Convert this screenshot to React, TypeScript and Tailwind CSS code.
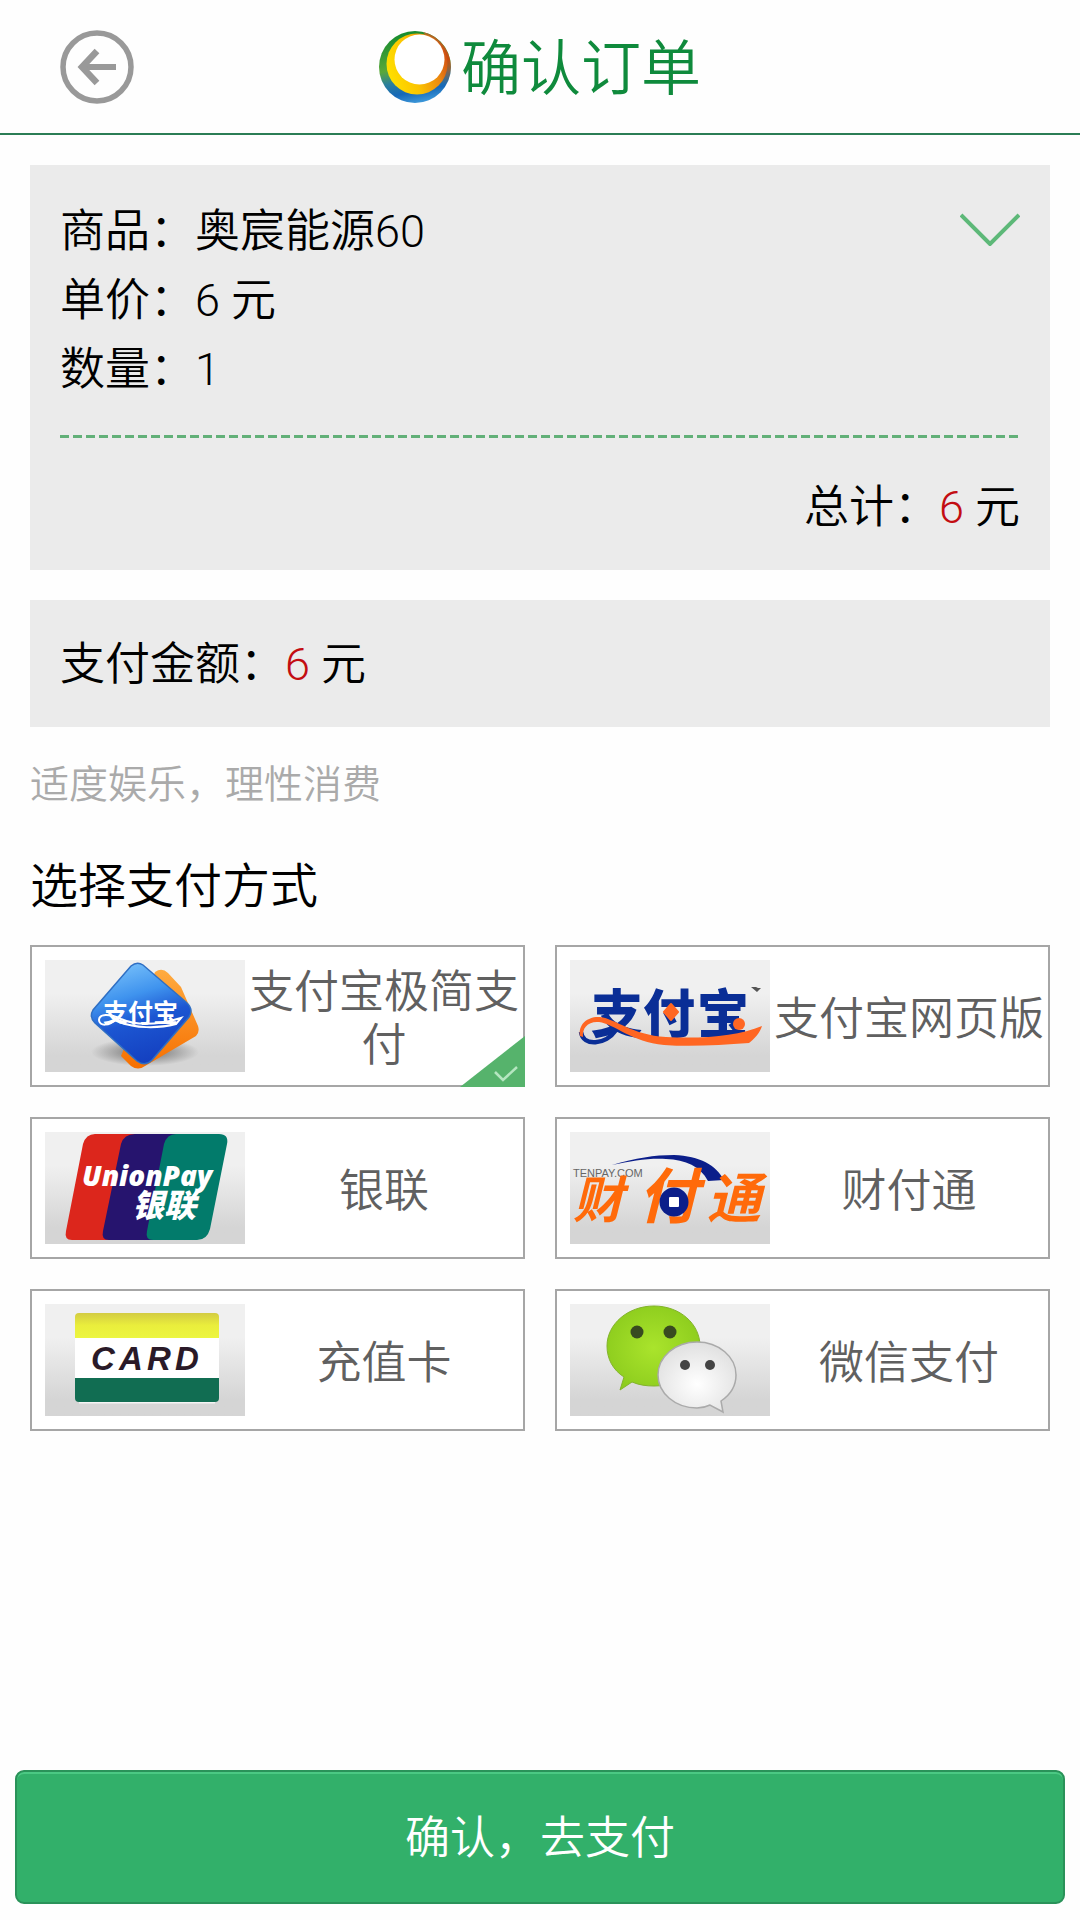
import { useState, type ReactNode } from "react";

const CJK = "'Noto Sans CJK SC', sans-serif";

function BackIcon() {
  return (
    <svg viewBox="0 0 74 74" className="size-[74px]" fill="none" stroke="#999" aria-hidden="true">
      <circle cx="37" cy="37" r="34" strokeWidth="5.5" />
      <path d="M22 37H56" strokeWidth="6" />
      <path d="M37 21L22 37L37 53" strokeWidth="6.500" />
    </svg>
  );
}

function BrandLogo() {
  return (
    <svg viewBox="0 0 72 72" className="size-[72px]" aria-hidden="true">
      <defs>
        <linearGradient id="rim" x1="0.3" y1="0" x2="0.5" y2="1">
          <stop offset="0" stopColor="#128a2e" />
          <stop offset="0.5" stopColor="#5aa83a" />
          <stop offset="0.68" stopColor="#2b7f9c" />
          <stop offset="0.85" stopColor="#1668b8" />
          <stop offset="1" stopColor="#3b96d8" />
        </linearGradient>
        <linearGradient id="glow" x1="0" y1="0.6" x2="1" y2="0.3">
          <stop offset="0" stopColor="#ffe000" />
          <stop offset="0.4" stopColor="#fbc400" />
          <stop offset="0.75" stopColor="#ec8a10" />
          <stop offset="1" stopColor="#cf4a12" />
        </linearGradient>
        <linearGradient id="edge" x1="0" y1="0" x2="0" y2="1">
          <stop offset="0" stopColor="#b06a28" />
          <stop offset="0.5" stopColor="#c84a10" />
          <stop offset="1" stopColor="#c84a10" stopOpacity="0" />
        </linearGradient>
      </defs>
      <circle cx="36" cy="36" r="36" fill="url(#rim)" />
      <path d="M44 1A36 36 0 0 1 67 54L58 50L64 26Z" fill="url(#edge)" />
      <circle cx="38" cy="33" r="30.500" fill="url(#glow)" />
      <circle cx="40.500" cy="28.500" r="25" fill="#fff" />
    </svg>
  );
}

function LogoFrame({ children }: { children: ReactNode }) {
  return (
    <span className="block h-28 w-[200px] shrink-0 bg-linear-to-b from-[#f0f0f0] from-30% to-[#d5d5d5] to-85%">
      <svg viewBox="0 0 200 112" className="size-full" aria-hidden="true">
        {children}
      </svg>
    </span>
  );
}

function AlipayExpressLogo() {
  return (
    <LogoFrame>
      <defs>
        <linearGradient id="axBlue" x1="0.2" y1="0" x2="0.5" y2="1">
          <stop offset="0" stopColor="#7cc4fb" />
          <stop offset="0.35" stopColor="#3f93ee" />
          <stop offset="0.6" stopColor="#1c56d2" />
          <stop offset="1" stopColor="#1440c0" />
        </linearGradient>
        <linearGradient id="axOrange" x1="0" y1="0" x2="0" y2="1">
          <stop offset="0" stopColor="#ffab40" />
          <stop offset="1" stopColor="#f66f00" />
        </linearGradient>
        <radialGradient id="axShade">
          <stop offset="0" stopColor="#222" stopOpacity="0.6" />
          <stop offset="1" stopColor="#222" stopOpacity="0" />
        </radialGradient>
      </defs>
      <ellipse cx="100" cy="92" rx="54" ry="14" fill="url(#axShade)" />
      <path d="M110 12Q117 7 123 13L136 27L153 66Q155 72 151 76L100 106Q93 111 86 106L76 96Z" fill="url(#axOrange)" />
      <path
        d="M86 6Q92 1 98 5L141 42Q149 49 144 57L107 100Q100 107 92 101L50 63Q44 57 48 50Z"
        fill="url(#axBlue)"
        stroke="#2f6fc4"
        strokeWidth="1.500"
      />
      <text x="58" y="62" fontSize="25" fontWeight="700" fill="#fff" style={{ fontFamily: CJK }}>
        支付宝
      </text>
      <path d="M72 58C64 67 54 66 54 60C54 54 64 53 76 59C94 67 116 64 136 58L131 64C112 69 90 68 74 62" fill="none" stroke="#fff" strokeWidth="2" />
    </LogoFrame>
  );
}

function AlipayWebLogo() {
  return (
    <LogoFrame>
      <g fontSize="52" fontWeight="900" fill="#0a2e96" style={{ fontFamily: CJK }}>
        <text x="21" y="73">支</text>
        <text x="73" y="73">付</text>
        <text x="127" y="73">宝</text>
      </g>
      <path d="M11 72C13 87 36 85 46 70L54 62" fill="none" stroke="#0a2e96" strokeWidth="4.500" />
      <path
        d="M10 76C8 64 18 56 30 57C46 59 62 75 96 77C134 79 168 76 192 66C190 73 184 79 179 83C150 85 122 87 94 85C62 82 44 64 29 62C18 61 12 68 13 77Z"
        fill="#ff6622"
      />
      <path d="M101 44L108 52L101 60L94 52Z" fill="#ff6622" stroke="#ff6622" strokeWidth="2" strokeLinejoin="round" />
      <circle cx="169" cy="64" r="6" fill="#ff6622" />
      <path d="M181 27h5l2 1h3l-4 4z" fill="#555" />
    </LogoFrame>
  );
}

function UnionPayLogo() {
  return (
    <LogoFrame>
      <path d="M50 2H90V108H27Q19 108 21 99L38 12Q41 2 50 2Z" fill="#dc261c" />
      <path d="M90 2H135V108H64Q56 108 58 99L76 12Q79 2 90 2Z" fill="#26146e" />
      <path d="M131 2H174Q184 2 182 12L165 97Q162 108 152 108H108Q100 108 102 99L119 12Q122 2 131 2Z" fill="#027b6b" />
      <text x="37" y="54" fontSize="28" fontWeight="800" fontStyle="italic" fill="#fff" style={{ fontFamily: "'Open Sans', sans-serif" }}>
        UnionPay
      </text>
      <text x="87" y="85" fontSize="32" fontWeight="900" fontStyle="italic" fill="#fff" style={{ fontFamily: CJK }}>
        银联
      </text>
    </LogoFrame>
  );
}

function TenpayLogo() {
  return (
    <LogoFrame>
      <path d="M42 33C66 26 84 23 104 23C130 24 146 33 154 48L138 49C130 34 116 28 96 27C78 26 62 29 42 33Z" fill="#0b1e8a" />
      <text x="3" y="45" fontSize="11" fill="#666" style={{ fontFamily: "'Liberation Sans', sans-serif" }}>
        TENPAY.COM
      </text>
      <g fontWeight="700" fontStyle="italic" fill="#ff6a0a" style={{ fontFamily: CJK }}>
        <text x="3" y="86" fontSize="50">财</text>
        <text x="68" y="86" fontSize="60">付</text>
        <text x="137" y="86" fontSize="54">通</text>
      </g>
      <circle cx="104" cy="70" r="14.500" fill="#0b1e8a" />
      <rect x="99" y="65" width="10" height="10" rx="1" fill="#fff" />
    </LogoFrame>
  );
}

function CardLogo() {
  return (
    <LogoFrame>
      <defs>
        <linearGradient id="cardTop" x1="0" y1="0" x2="0" y2="1">
          <stop offset="0" stopColor="#d3cc42" />
          <stop offset="0.5" stopColor="#eaee3c" />
          <stop offset="1" stopColor="#ecf640" />
        </linearGradient>
      </defs>
      <path d="M30 34V13Q30 9 34 9H170Q174 9 174 13V34Z" fill="url(#cardTop)" />
      <rect x="30" y="34" width="144" height="40" fill="#fff" />
      <path d="M34 98.500H170" stroke="#f4f4f4" strokeWidth="2" />
      <path d="M30 74H174V94Q174 98 170 98H34Q30 98 30 94Z" fill="#116d52" />
      <text x="46 74 102 130" y="66" fontSize="33" fontWeight="700" fontStyle="italic" fill="#2a1a28" style={{ fontFamily: "'Liberation Sans', sans-serif" }}>
        CARD
      </text>
    </LogoFrame>
  );
}

function WechatLogo() {
  return (
    <LogoFrame>
      <defs>
        <radialGradient id="wxGreen" cx="0.5" cy="0.5" r="0.6">
          <stop offset="0" stopColor="#aae42c" />
          <stop offset="1" stopColor="#8aca1c" />
        </radialGradient>
        <radialGradient id="wxWhite" cx="0.5" cy="0.6" r="0.6">
          <stop offset="0" stopColor="#ffffff" />
          <stop offset="1" stopColor="#e0e0e0" />
        </radialGradient>
      </defs>
      <path
        d="M84 2C110 2 130 20 130 42C130 65 110 82 84 82C76 82 69 81 62 78L50 86L54 73C43 66 37 55 37 42C37 20 58 2 84 2Z"
        fill="url(#wxGreen)"
        stroke="#83b32c"
      />
      <circle cx="67" cy="28" r="6.500" fill="#384a20" />
      <circle cx="100" cy="28" r="6.500" fill="#384a20" />
      <path
        d="M127 38C149 38 166 53 166 71C166 82 160 91 151 97L153 108L140 101C136 103 131 104 127 104C105 104 88 89 88 71C88 53 105 38 127 38Z"
        fill="url(#wxWhite)"
        stroke="#aaa"
        strokeWidth="1.500"
      />
      <circle cx="115" cy="61" r="5" fill="#444" />
      <circle cx="140" cy="61" r="5" fill="#444" />
    </LogoFrame>
  );
}

const methods = [
  { id: "alipay-express", label: "支付宝极简支付", Logo: AlipayExpressLogo },
  { id: "alipay-web", label: "支付宝网页版", Logo: AlipayWebLogo },
  { id: "unionpay", label: "银联", Logo: UnionPayLogo },
  { id: "tenpay", label: "财付通", Logo: TenpayLogo },
  { id: "card", label: "充值卡", Logo: CardLogo },
  { id: "wechat", label: "微信支付", Logo: WechatLogo },
];

export default function App() {
  const [selected, setSelected] = useState("alipay-express");

  return (
    <div className="flex min-h-screen flex-col bg-[#fefefe] font-['Roboto','Noto_Sans_CJK_SC',sans-serif] text-[45px] font-[350] leading-[69px] text-black">
      <header className="grid grid-cols-[1fr_auto_1fr] items-center border-b-2 border-[#2b7d55] px-[60px] pb-[29px] pt-[30px]">
        <button type="button" aria-label="返回" className="size-[74px] justify-self-start">
          <BackIcon />
        </button>
        <h1 className="flex items-center gap-2.5 text-[60px] leading-[68px] text-[#0f8a3c]">
          <BrandLogo />
          <span className="pt-1.5">确认订单</span>
        </h1>
      </header>

      <main className="px-[30px] pt-[30px]">
        <section className="bg-[#ebebeb] px-[30px] pb-7 pt-8">
          <div className="flex items-start justify-between">
            <div>
              <p>商品：奥宸能源60</p>
              <p>单价：6 元</p>
              <p>数量：1</p>
            </div>
            <button type="button" aria-label="展开" className="py-4">
              <svg viewBox="0 0 60 33" className="h-[33px] w-[60px]" fill="none" stroke="#5db878" strokeWidth="4" aria-hidden="true">
                <path d="M1 2L30 31L59 2" />
              </svg>
            </button>
          </div>
          <div className="mt-[31px] h-[3px] bg-[repeating-linear-gradient(90deg,#62b078_0_9px,transparent_9px_13px)]" />
          <p className="mt-[35px] text-right">
            总计：<span className="text-[#c30d12]">6</span> 元
          </p>
        </section>

        <section className="mt-[30px] bg-[#ebebeb] px-[30px] pb-7 pt-[30px]">
          <p>
            支付金额：<span className="text-[#c30d12]">6</span> 元
          </p>
        </section>

        <p className="mt-6 text-[39px] text-[#aaa]">适度娱乐，理性消费</p>

        <section>
          <h2 id="methods-title" className="mt-8 text-[48px]">
            选择支付方式
          </h2>
          <div role="radiogroup" aria-labelledby="methods-title" className="mt-6 grid grid-cols-2 gap-[30px]">
            {methods.map(({ id, label, Logo }) => (
              <label
                key={id}
                className="relative flex cursor-pointer items-center border-2 border-[#a6a6a6] bg-white py-[13px] pl-[13px] text-[#606060]"
              >
                <input
                  type="radio"
                  name="payment"
                  value={id}
                  checked={selected === id}
                  onChange={() => setSelected(id)}
                  className="sr-only"
                />
                <Logo />
                <span className="flex-1 pt-1.5 text-center leading-[53px]">{label}</span>
                {selected === id && (
                  <svg viewBox="0 0 65 51" className="absolute -bottom-0.5 -right-0.5 h-[51px] w-[65px]" aria-hidden="true">
                    <path d="M0 51L65 0V51Z" fill="#56b36c" />
                    <path d="M35 36L43 44L57 31" fill="none" stroke="#b5e6c0" strokeWidth="2.500" />
                  </svg>
                )}
              </label>
            ))}
          </div>
        </section>
      </main>

      <footer className="mt-auto px-[15px] pb-4 pt-8">
        <button
          type="button"
          className="w-full rounded-[9px] border-2 border-[#2a9259] bg-[#32b06a] pb-7 pt-8 leading-[70px] text-white shadow-[inset_0_2px_0_#4bc883]"
        >
          确认，去支付
        </button>
      </footer>
    </div>
  );
}
